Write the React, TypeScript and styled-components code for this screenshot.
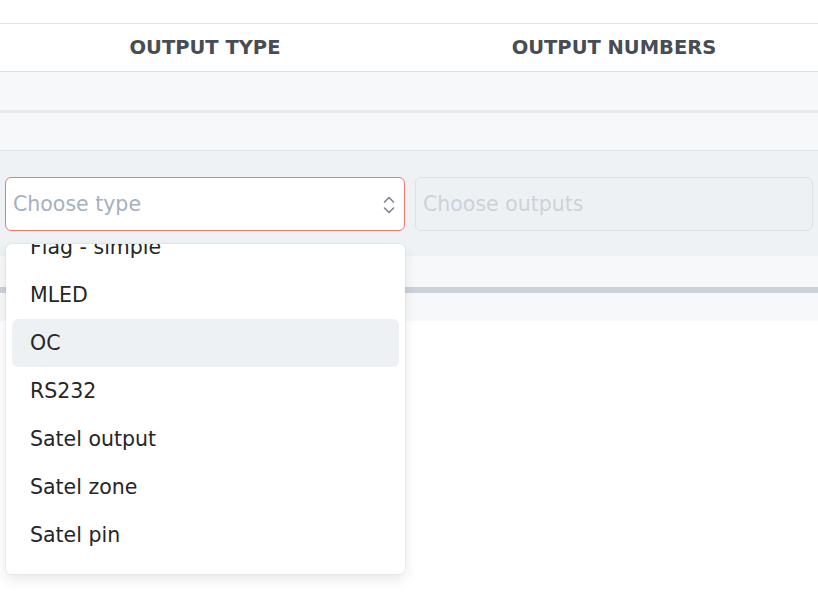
import React, { useLayoutEffect, useRef } from "react";
import styled, { createGlobalStyle } from "styled-components";

const GlobalStyle = createGlobalStyle`
	body {
		margin: 0;
		background: #fff;
		font-family: "DejaVu Sans", "Noto Sans", sans-serif;
	}
`;

const Page = styled.div`
	width: 818px;
	min-height: 615px;
	position: relative;
	background: #fff;
`;

const TopBar = styled.div`
	height: 23px;
	border-bottom: 1px solid #e2e4e7;
`;

const Row = styled.div<{ $height: number; $bg: string; $border: string }>`
	display: grid;
	grid-template-columns: 410px 408px;
	height: ${(p) => p.$height}px;
	background: ${(p) => p.$bg};
	border-bottom: ${(p) => p.$border};
`;

const HeaderCell = styled.div`
	display: flex;
	align-items: center;
	justify-content: center;
	font-weight: bold;
	font-size: 19.5px;
	color: #474c55;
	text-transform: uppercase;
`;

const EditRow = styled.div`
	display: grid;
	grid-template-columns: 410px 408px;
	height: 105px;
	background: #eef2f5;
`;

const EditCell = styled.div`
	position: relative;
	padding: 26px 5px;
	box-sizing: border-box;
`;

const Field = styled.div<{ $invalid?: boolean; $disabled?: boolean }>`
	height: 54px;
	box-sizing: border-box;
	border-radius: 6px;
	border: 1px solid ${(p) => (p.$invalid ? "#f5766c" : "#dce1e6")};
	background: ${(p) => (p.$disabled ? "#edf1f4" : "#fff")};
	display: flex;
	align-items: center;
	justify-content: space-between;
	padding: 0 8px 0 7px;
	font-size: 20.5px;
	color: ${(p) => (p.$disabled ? "#cdd2d8" : "#a5b1bf")};
`;

const Chevrons = styled.svg`
	margin-right: 1px;
	margin-top: 2px;
`;

const Footer = styled.div`
	background: #f7f8fa;
	padding: 31px 0 28px;
`;

const Track = styled.div`
	height: 6px;
	background: #cbd2d9;
`;

const Menu = styled.div`
	position: absolute;
	z-index: 10;
	top: 93px;
	left: 6px;
	width: 399px;
	height: 330px;
	overflow-y: auto;
	scrollbar-width: none;
	box-sizing: border-box;
	background: #fff;
	border-radius: 6px;
	box-shadow: 0 0 0 1px rgba(0, 0, 0, 0.04), 0 6px 14px rgba(0, 0, 0, 0.09);
	padding: 6px 6px 15px;
	&::-webkit-scrollbar {
		display: none;
	}
`;

const Option = styled.div<{ $active?: boolean }>`
	height: 48px;
	display: flex;
	align-items: center;
	padding: 0 18px;
	border-radius: 6px;
	font-size: 20.5px;
	color: #262626;
	background: ${(p) => (p.$active ? "#eef1f4" : "transparent")};
`;

const options = [
	"Flag - simple",
	"MLED",
	"OC",
	"RS232",
	"Satel output",
	"Satel zone",
	"Satel pin",
];

const TypeMenu = () => {
	const ref = useRef<HTMLDivElement>(null);
	useLayoutEffect(() => {
		if (ref.current) ref.current.scrollTop = 27;
	}, []);
	return (
		<Menu ref={ref}>
			{options.map((o) => (
				<Option key={o} $active={o === "OC"}>
					{o}
				</Option>
			))}
		</Menu>
	);
};

export default function App() {
	return (
		<Page>
			<GlobalStyle />
			<TopBar />
			<Row $height={47} $bg="#fff" $border="1px solid #dee1e5">
				<HeaderCell>Output type</HeaderCell>
				<HeaderCell>Output numbers</HeaderCell>
			</Row>
			<Row $height={38} $bg="#f7f8fa" $border="3px solid #e8eaed" />
			<Row $height={37} $bg="#f7f8fa" $border="1px solid #dde3e8" />
			<EditRow>
				<EditCell>
					<Field $invalid>
						<span>Choose type</span>
						<Chevrons width="12" height="20" viewBox="0 0 12 20" fill="none" stroke="#7b8490" strokeWidth="1.6" strokeLinecap="round" strokeLinejoin="round">
							<polyline points="1.5,7 6,2.5 10.5,7" />
							<polyline points="1.5,13 6,17.5 10.5,13" />
						</Chevrons>
					</Field>
					<TypeMenu />
				</EditCell>
				<EditCell>
					<Field $disabled>
						<span>Choose outputs</span>
					</Field>
				</EditCell>
			</EditRow>
			<Footer>
				<Track />
			</Footer>
		</Page>
	);
}
